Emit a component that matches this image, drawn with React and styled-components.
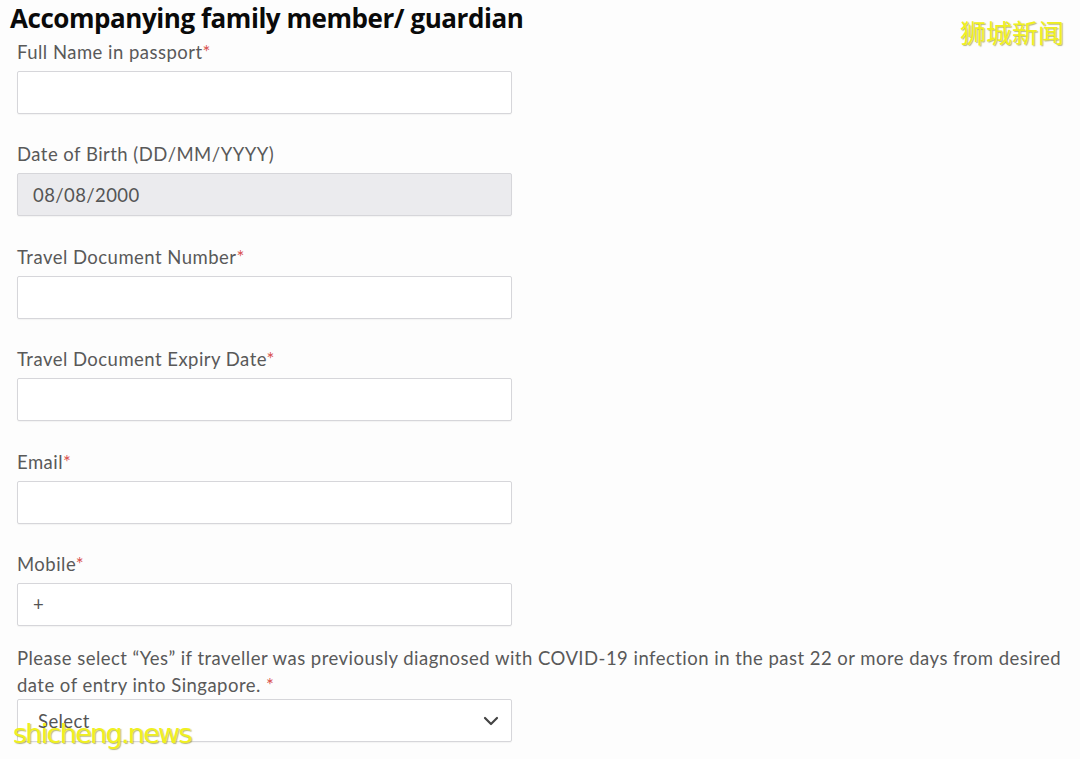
import styled, { createGlobalStyle } from "styled-components";

const GlobalStyle = createGlobalStyle`
  body {
    margin: 0;
    background: #fdfdfd;
    font-family: Lato, "Liberation Sans", sans-serif;
  }
`;

const Page = styled.div`
  position: relative;
  width: 1080px;
  height: 759px;
  overflow: hidden;
  background: #fdfdfd;
`;

const Title = styled.h1`
  margin: 0 0 5px 10px;
  font-family: "Open Sans", "Noto Sans", sans-serif;
  font-weight: 700;
  font-size: 26px;
  line-height: 36px;
  letter-spacing: -0.45px;
  color: #0a0a0a;
`;

const Form = styled.form`
  display: flex;
  flex-direction: column;
  gap: 29.4px;
  padding-left: 17px;
  width: 1052px;
`;

const Field = styled.div`
  display: flex;
  flex-direction: column;
  gap: ${({ $tight }) => ($tight ? "0px" : "8px")};
`;

const Label = styled.label`
  font-size: 18.5px;
  letter-spacing: 0.47px;
  line-height: ${({ $tall }) => ($tall ? "27px" : "22px")};
  color: #595959;
`;

const Star = styled.span`
  color: #d9534f;
`;

const Input = styled.div`
  box-sizing: border-box;
  width: 495px;
  height: 43px;
  display: flex;
  align-items: center;
  padding: 0 ${({ $wide }) => ($wide ? "20px" : "15px")};
  border: 1px solid #d6d6da;
  border-radius: 2px;
  background: ${({ $disabled }) => ($disabled ? "#ebebee" : "#ffffff")};
  box-shadow: 0 1px 1px rgba(0, 0, 0, 0.04);
  font-size: 18.5px;
  letter-spacing: 0.4px;
  color: #555;
`;

const Select = styled(Input)`
  justify-content: space-between;
  padding-right: 12px;
`;

const Watermark = styled.div`
  position: absolute;
  color: #f0f020;
  text-shadow: 1px 1px 1px rgba(120, 120, 0, 0.5);
  pointer-events: none;
`;

const CnMark = styled(Watermark)`
  top: 13px;
  left: 960px;
  font-family: "Noto Sans CJK SC", sans-serif;
  font-size: 26px;
  letter-spacing: 0px;
`;

const EnMark = styled(Watermark)`
  top: 718px;
  left: 13px;
  font-family: "DejaVu Sans", sans-serif;
  font-size: 27px;
  letter-spacing: -1.7px;
`;

const fields = [
  { label: "Full Name in passport", required: true },
  { label: "Date of Birth (DD/MM/YYYY)", value: "08/08/2000", disabled: true },
  { label: "Travel Document Number", required: true },
  { label: "Travel Document Expiry Date", required: true },
  { label: "Email", required: true },
  { label: "Mobile", required: true, value: "+" },
];

function Chevron() {
  return (
    <svg width="16" height="10" viewBox="0 0 16 10" fill="none">
      <path d="M2 2l6 6 6-6" stroke="#444" strokeWidth="2.2" strokeLinecap="round" strokeLinejoin="round" />
    </svg>
  );
}

export default function App() {
  return (
    <Page>
      <GlobalStyle />
      <Title>Accompanying family member/ guardian</Title>
      <Form>
        {fields.map((f) => (
          <Field key={f.label}>
            <Label>
              {f.label}
              {f.required && <Star>*</Star>}
            </Label>
            <Input $disabled={f.disabled}>{f.value}</Input>
          </Field>
        ))}
        <Field $tight style={{ marginTop: "-10px" }}>
          <Label $tall>
            Please select “Yes” if traveller was previously diagnosed with COVID-19 infection in the past 22 or more days from desired date of entry into Singapore. <Star>*</Star>
          </Label>
          <Select $wide>
            <span>Select</span>
            <Chevron />
          </Select>
        </Field>
      </Form>
      <CnMark>狮城新闻</CnMark>
      <EnMark>shicheng.news</EnMark>
    </Page>
  );
}
